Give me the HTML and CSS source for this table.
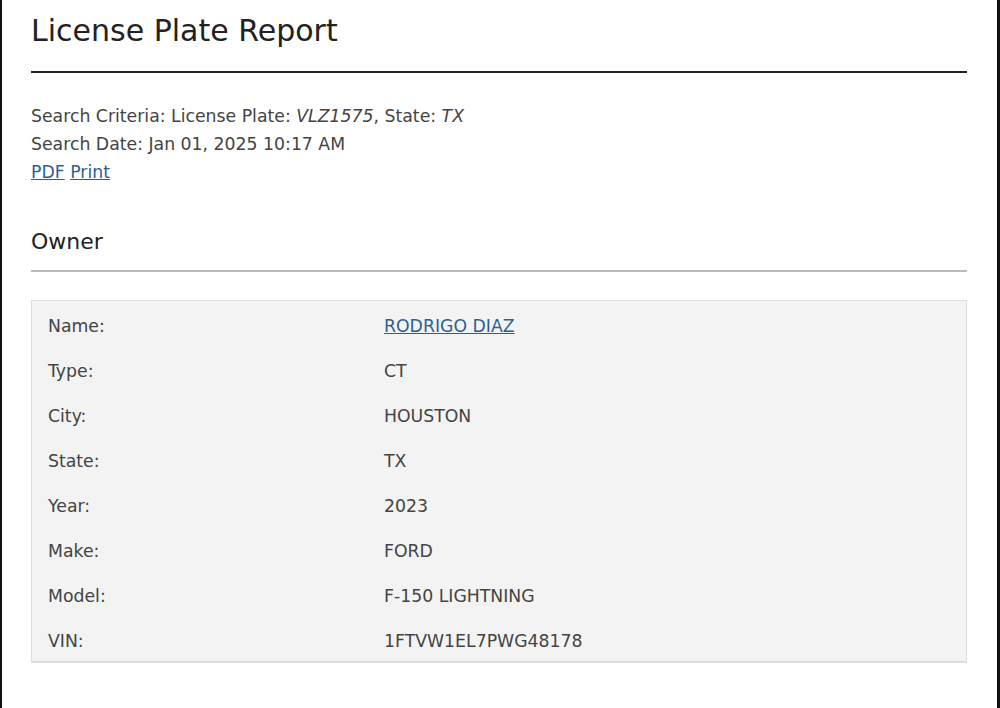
FILE: index.html
```html
<!DOCTYPE html>
<html>
<head>
<meta charset="utf-8">
<link rel="stylesheet" href="styles.css">
</head>
<body>
<div class="frame">
  <div class="page">
    <h1 class="title">License Plate Report</h1>
    <div class="criteria">
      <div>Search Criteria: License Plate: <em>VLZ1575</em>, State: <em>TX</em></div>
      <div>Search Date: Jan 01, 2025 10:17 AM</div>
      <div><a href="#">PDF</a> <a href="#">Print</a></div>
    </div>
    <h2 class="section">Owner</h2>
    <div class="table">
      <div class="row"><span class="label">Name:</span><span class="value"><a href="#">RODRIGO DIAZ</a></span></div>
      <div class="row"><span class="label">Type:</span><span class="value">CT</span></div>
      <div class="row"><span class="label">City:</span><span class="value">HOUSTON</span></div>
      <div class="row"><span class="label">State:</span><span class="value">TX</span></div>
      <div class="row"><span class="label">Year:</span><span class="value">2023</span></div>
      <div class="row"><span class="label">Make:</span><span class="value">FORD</span></div>
      <div class="row"><span class="label">Model:</span><span class="value">F-150 LIGHTNING</span></div>
      <div class="row"><span class="label">VIN:</span><span class="value">1FTVW1EL7PWG48178</span></div>
    </div>
  </div>
</div>
</body>
</html>
```
FILE: styles.css
```css
html, body {
  margin: 0;
  padding: 0;
  background: #fff;
}
body {
  font-family: "DejaVu Sans", sans-serif;
  color: #333;
}
.frame {
  height: 708px;
  box-sizing: border-box;
  border-left: 2px solid #111;
  border-right: 3px solid #111;
  overflow: hidden;
}
.page {
  padding: 0 30px 0 29px;
}
.title {
  margin: 0;
  padding-top: 11px;
  height: 73px;
  box-sizing: border-box;
  font-size: 30px;
  font-weight: normal;
  color: #222;
  line-height: 40px;
  border-bottom: 2px solid #222;
}
.criteria {
  margin-top: 29px;
  font-size: 17.3px;
  line-height: 28px;
  color: #444;
}
.criteria a {
  color: #2f5f8f;
}
.section {
  margin: 43px 0 0 0;
  height: 43px;
  box-sizing: border-box;
  font-size: 22px;
  font-weight: normal;
  color: #222;
  line-height: 26px;
  border-bottom: 2px solid #bbb;
}
.table {
  margin-top: 28px;
  background: #f3f3f3;
  border: 1px solid #dcdcdc;
  border-bottom-width: 2px;
  padding: 2px 0 0 0;
}
.row {
  display: grid;
  grid-template-columns: 336px 1fr;
  height: 45px;
  align-items: center;
  padding-left: 16px;
  font-size: 17.3px;
  color: #444;
}
.row:last-child {
  height: 43px;
  align-items: start;
  padding-top: 13px;
  box-sizing: border-box;
}
.value a {
  color: #2f5f8f;
}
```
